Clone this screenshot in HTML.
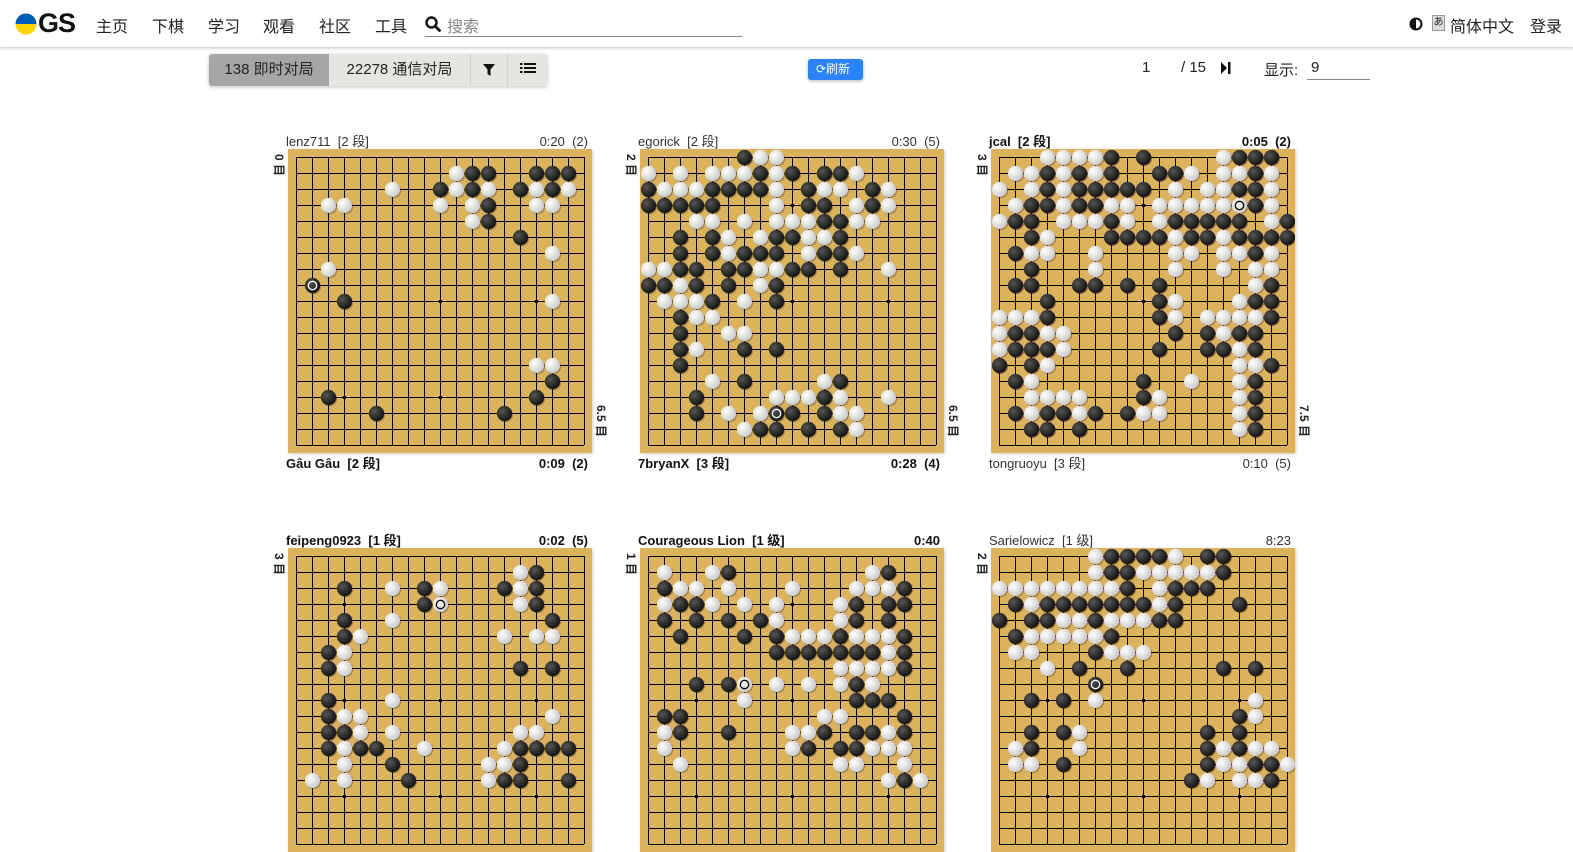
<!DOCTYPE html>
<html><head><meta charset="utf-8"><style>
*{margin:0;padding:0;box-sizing:border-box}
body{width:1573px;height:785px;overflow:hidden;background:#fff;font-family:"Liberation Sans","Noto Sans CJK SC",sans-serif;color:#222;position:relative}
.hdr{position:absolute;left:0;top:0;width:1573px;height:47px;background:#fff;box-shadow:0 1px 3px rgba(0,0,0,.25)}
.a{position:absolute;white-space:nowrap}
.nav{top:13px;font-size:16px;color:#222}
.tb{position:absolute;left:209px;top:54px;height:32px;display:flex;border-radius:3px;box-shadow:0 1px 4px rgba(0,0,0,.25);overflow:hidden;font-size:15px}
.tb div{height:32px;line-height:32px;text-align:center}
.nm{position:absolute;font-size:13px;color:#333;white-space:nowrap;height:16px;line-height:16px}
.b{font-weight:bold;color:#111}
.sc{position:absolute;writing-mode:vertical-rl;text-orientation:sideways;font-size:12px;font-weight:bold;color:#222;white-space:nowrap}
.bd{position:absolute;width:304px;height:304px;box-shadow:1px 1px 3px rgba(0,0,0,.2)}
</style></head><body>
<div class="hdr">
<svg class="a" style="left:15px;top:13px" width="22" height="22"><circle cx="11" cy="11" r="10.5" fill="#ffd500"/><path d="M0.5 11 A10.5 10.5 0 0 1 21.5 11Z" fill="#005bbb"/></svg>
<div class="a" style="left:38px;top:8px;font-size:27px;font-weight:bold;letter-spacing:-1px;color:#111">GS</div>
<div class="a nav" style="left:96px">主页</div>
<div class="a nav" style="left:152px">下棋</div>
<div class="a nav" style="left:208px">学习</div>
<div class="a nav" style="left:263px">观看</div>
<div class="a nav" style="left:319px">社区</div>
<div class="a nav" style="left:375px">工具</div>
<svg class="a" style="left:425px;top:16px" width="16" height="16"><circle cx="6.5" cy="6.5" r="5" fill="none" stroke="#111" stroke-width="2.4"/><path d="M10 10 L14.5 14.5" stroke="#111" stroke-width="2.8" stroke-linecap="round"/></svg>
<div class="a nav" style="left:447px;color:#888">搜索</div>
<div class="a" style="left:425px;top:36px;width:317px;height:1px;background:#888"></div>
<svg class="a" style="left:1409px;top:17px" width="14" height="14"><circle cx="7" cy="7" r="5.5" fill="#fff" stroke="#111" stroke-width="2"/><path d="M7 1.5 A5.5 5.5 0 0 0 7 12.5Z" fill="#111"/></svg>
<div class="a" style="left:1432px;top:15px;width:13px;height:16px;background:#ddd;border:1px solid #999;font-size:10px;line-height:14px;text-align:center">あ</div>
<div class="a nav" style="left:1450px">简体中文</div>
<div class="a nav" style="left:1530px">登录</div>
</div>
<div class="tb">
<div style="width:120px;background:#a6a6a6;color:#222">138 即时对局</div>
<div style="width:141px;background:#e6e6e1;color:#222">22278 通信对局</div>
<div style="width:37px;background:#e6e6e1;border-left:1px solid #d0d0cc"><svg width="12" height="12" style="margin-top:10px"><path d="M0 0H12L7.5 5.5V12L4.5 10V5.5Z" fill="#111"/></svg></div>
<div style="width:40px;background:#e6e6e1;border-left:1px solid #d0d0cc"><svg width="16" height="14" style="margin-top:8px"><path d="M0 1h2.5v2H0zM4 1h12v2H4zM0 5h2.5v2H0zM4 5h12v2H4zM0 9h2.5v2H0zM4 9h12v2H4z" fill="#111"/></svg></div>
</div>
<div class="a" style="left:808px;top:59px;width:55px;height:21px;background:#2b83f6;border-radius:3px;color:#fff;font-size:12px;line-height:21px;padding-left:8px;box-shadow:0 1px 3px rgba(0,0,0,.3)">⟳刷新</div>
<div class="a" style="left:1142px;top:59px;font-size:15px">1</div>
<div class="a" style="left:1181px;top:59px;font-size:15px">/ 15</div>
<svg class="a" style="left:1221px;top:62px" width="10" height="12"><path d="M0 0L6 6L0 12Z M7 0h2.5v12H7z" fill="#111"/></svg>
<div class="a" style="left:1264px;top:59px;font-size:15px">显示:</div>
<div class="a" style="left:1311px;top:59px;font-size:15px">9</div>
<div class="a" style="left:1307px;top:79px;width:63px;height:1px;background:#888"></div>
<div id="boards"></div>
<script>
var B=[
{x:288,y:149,t:["lenz711  [2 段]","0:20  (2)",0],bt:["Gâu Gâu  [2 段]","0:09  (2)",1],l:"0 目",r:"6.5 目",g:[
"...................","..........wbb..bbb.","......w..bwbw.bwbw.","..ww.....w.wb..ww..","...........wb......","..............b....","................w..","..w................",".B.................","...b............w..","...................","...................","...................","...............ww..","................b..","..b............b...",".....b.......b.....","...................","..................."]},
{x:640,y:149,t:["egorick  [2 段]","0:30  (5)",0],bt:["7bryanX  [3 段]","0:28  (4)",1],l:"2 目",r:"6.5 目",g:[
"......bww..........","w.w.wwwbwb.bbw.....","bwwwbbbbw.bww.bw...","bbbbb...w.bb.wbw...","...ww.w.wwwbbww....","..b.bw.wbbwwb......","..b.bwbbb.wbbw.....","wwbb.bbwwbb.b..w...","bbwb.b.wb..........",".wwwb.w.b..........","..bww..............","..b..ww............","..bw..b.b..........","..b................","....w.b....wb......","...b....wwwbw..w...","...b.w.wBb.bww.....","......wbb.b.bw.....","..................."]},
{x:991,y:149,t:["jcal  [2 段]","0:05  (2)",1],bt:["tongruoyu  [3 段]","0:10  (5)",0],l:"3 目",r:"7.5 目",g:[
"...wwwwb.b....wbbb.",".wwbwbwb..bbw.wwbw.","w.wbwbbbbb.w.wwbbw.",".wbbwbbww.wwwwwWbw.","wbb.wwwbw.wbbbbb.wb","..bw...bbbbwbbwbbbb",".bww..w....ww.wwbw.","..b...w....w..w.ww.",".bb..bb.b.b.....wb.","...b......bw...wbb.","wwwb......bw.wwwwb.","wbbww......b.bwbb..","wbbbw.....b..bbwb..","b.bw...........wwb.",".bw......b..w..wb..","..wwww...bw....wb..",".bwbbwb.bww....wb..","..bb.b.........wb..","..................."]},
{x:288,y:548,t:["feipeng0923  [1 段]","0:02  (5)",1],l:"3 目",g:[
"...................","..............wb...","...b..w.bw...bwb...","........bW....wb...","...b..w.........b..","...bw........w.ww..","..bw...............","..bw..........b.b..","...................","..b...w............","..bww...........w..","..bbw.w.......ww...","..bwbb..w....wbbbb.","...w..b.....wwb....",".w.w...b....wbb..b.","...................","...................","...................","..................."]},
{x:640,y:548,t:["Courageous Lion  [1 级]","0:40",1],l:"1 目",g:[
"...................",".w..wb........wb...",".bww.w...w...wwwb..",".wbbw.w.w...wb.bb..",".b.b.b.bw...wb.b...","..b...b.bwwwbwwwb..","........bbbbbbbwb..","............wwwwb..","...b.bW.w.w.wbw....","......w......bbb...",".bb........ww...b..",".wb..b...wwb.bbwb..",".w.......wb.bbwww..","..w.........ww..w..","...............wbw.","...................","...................","...................","..................."]},
{x:991,y:548,t:["Sarielowicz  [1 级]","8:23",0],l:"2 目",g:[
"......wbbbbw.bb....","......wbbwwwwwb....","wwwwwwwwb.wbbb.....",".bwbbbbbbbwb...b...","b.bbwwbwwwbb.......",".bwwwwwb...........",".ww...bwww.........","...w.b..b.....b.b..","......B............","..b.b.w.........w..","...............bw..","..b.bw.......b.b...",".wb..w.......bwbww.",".ww.b........bwwbbw","............bw.wwb.","...................","...................","...................","..................."]}
];
var h='';
B.forEach(function(d,k){
 var s='<svg class="bd" style="left:'+d.x+'px;top:'+d.y+'px" width="304" height="304"><defs><radialGradient id="gb'+k+'" cx="35%" cy="35%" r="70%"><stop offset="0" stop-color="#555"/><stop offset="1" stop-color="#111"/></radialGradient><radialGradient id="gw'+k+'" cx="35%" cy="35%" r="70%"><stop offset="0" stop-color="#fff"/><stop offset="1" stop-color="#c8c8c8"/></radialGradient></defs><rect width="304" height="304" fill="#dcb35c"/>';
 for(var i=0;i<19;i++){var p=8+16*i;s+='<path d="M8 '+p+'.5H296M'+p+'.5 8V296" stroke="#000" stroke-width="1"/>';}
 [3,9,15].forEach(function(a){[3,9,15].forEach(function(b){s+='<rect x="'+(7+16*a)+'" y="'+(7+16*b)+'" width="3" height="3"/>';});});
 d.g.forEach(function(row,r){for(var c=0;c<19;c++){var ch=row[c];if(ch=='.')continue;var cx=8.5+16*c,cy=8.5+16*r,bl=(ch=='b'||ch=='B');
  s+='<circle cx="'+(cx+1)+'" cy="'+(cy+1)+'" r="7.6" fill="rgba(0,0,0,.3)"/><circle cx="'+cx+'" cy="'+cy+'" r="7.6" fill="url(#g'+(bl?'b':'w')+k+')"/>';
  if(ch=='B'||ch=='W')s+='<circle cx="'+cx+'" cy="'+cy+'" r="4.2" fill="none" stroke="'+(bl?'#fff':'#000')+'" stroke-width="1.3"/>';}});
 s+='</svg>';h+=s;
 var cl=d.t[2]?' b':'';
 h+='<div class="nm'+cl+'" style="left:'+(d.x-2)+'px;top:'+(d.y-15)+'px">'+d.t[0].replace(/ /g,'&nbsp;')+'</div>';
 h+='<div class="nm'+cl+'" style="right:'+(1573-d.x-300)+'px;top:'+(d.y-15)+'px">'+d.t[1].replace(/ /g,'&nbsp;')+'</div>';
 if(d.bt){var c2=d.bt[2]?' b':'';
 h+='<div class="nm'+c2+'" style="left:'+(d.x-2)+'px;top:'+(d.y+307)+'px">'+d.bt[0].replace(/ /g,'&nbsp;')+'</div>';
 h+='<div class="nm'+c2+'" style="right:'+(1573-d.x-300)+'px;top:'+(d.y+307)+'px">'+d.bt[1].replace(/ /g,'&nbsp;')+'</div>';}
 h+='<div class="sc" style="left:'+(d.x-17)+'px;top:'+(d.y+5)+'px">'+d.l+'</div>';
 if(d.r)h+='<div class="sc" style="left:'+(d.x+305)+'px;top:'+(d.y+256)+'px">'+d.r+'</div>';
});
document.getElementById('boards').innerHTML=h;
</script>
</body></html>
